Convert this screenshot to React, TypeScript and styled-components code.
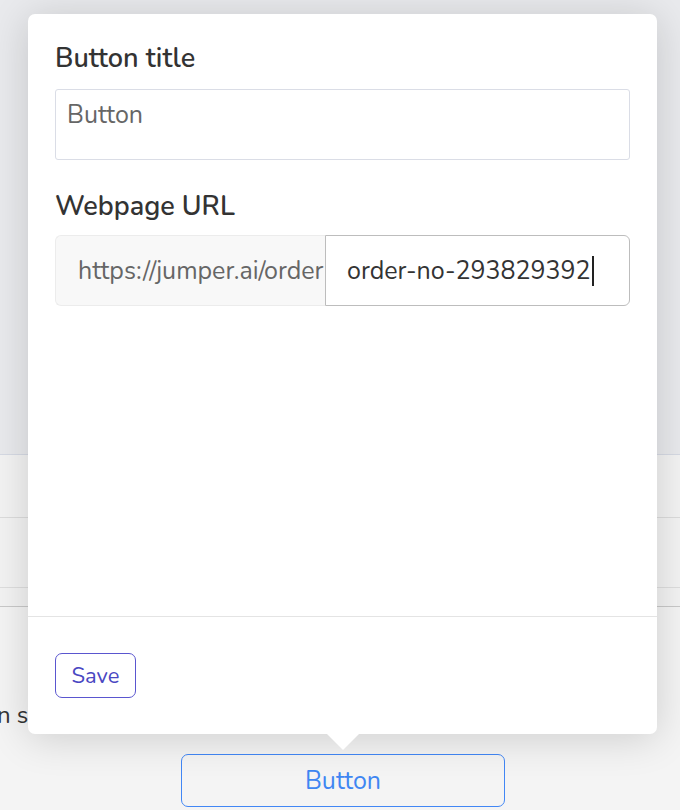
import React from 'react'
import styled, { createGlobalStyle } from 'styled-components'

const GlobalStyle = createGlobalStyle`
  html, body {
    margin: 0;
    padding: 0;
    background: #f4f4f4;
    font-family: "Nunito", "Lato", "Noto Sans", sans-serif;
  }
  * { box-sizing: border-box; }
`

const Page = styled.div`
  position: relative;
  width: 680px;
  height: 810px;
  overflow: hidden;
  display: flex;
  flex-direction: column;
  background: #f4f4f4;
`

const TopPanel = styled.div`
  height: 455px;
  flex-shrink: 0;
  background: #e9eaed;
  border-bottom: 1px solid #d6dae4;
`

const Row = styled.div<{ $h: number; $line: string }>`
  height: ${(p) => p.$h}px;
  flex-shrink: 0;
  background: #f3f3f3;
  border-bottom: 1px solid ${(p) => p.$line};
`

const Hint = styled.p`
  margin: 94px 0 0 -3px;
  font-size: 24px;
  color: #333;
  line-height: 28px;
  white-space: nowrap;
`

const TriggerWrap = styled.div`
  display: flex;
  justify-content: center;
  padding: 25px 0 0 6px;
`

const TriggerButton = styled.button`
  width: 324px;
  height: 53px;
  background: transparent;
  border: 1px solid #4287f5;
  border-radius: 7px;
  color: #3f86f2;
  font-family: inherit;
  font-size: 25px;
  cursor: pointer;
`

const Popover = styled.div`
  position: absolute;
  top: 14px;
  left: 28px;
  width: 629px;
  height: 720px;
  background: #fff;
  border-radius: 7px;
  box-shadow: 0 4px 40px rgba(0, 0, 0, 0.16);
  display: flex;
  flex-direction: column;

  &::after {
    content: '';
    position: absolute;
    bottom: -16px;
    left: 298px;
    border-left: 17px solid transparent;
    border-right: 17px solid transparent;
    border-top: 17px solid #fff;
  }
`

const Body = styled.div`
  flex: 1;
  padding: 28px 27px 0;
  border-bottom: 1px solid #e4e4e4;
`

const Label = styled.div<{ $top?: number }>`
  margin-top: ${(p) => p.$top ?? 0}px;
  font-size: 27px;
  font-weight: 600;
  color: #333;
  line-height: 34px;
`

const TextField = styled.div`
  margin-top: 13px;
  height: 71px;
  border: 1px solid #dadde6;
  border-radius: 3px;
  padding: 10px 11px;
  font-size: 25px;
  color: #666;
  line-height: 30px;
`

const UrlGroup = styled.div`
  margin-top: 11px;
  height: 71px;
  display: flex;
`

const UrlPrefix = styled.div`
  width: 270px;
  flex-shrink: 0;
  background: #f8f8f8;
  border: 1px solid #ececec;
  border-right: none;
  border-radius: 6px 0 0 6px;
  display: flex;
  align-items: center;
  padding-left: 22px;
  font-size: 25px;
  color: #666;
  white-space: nowrap;
  overflow: hidden;
`

const UrlInput = styled.div`
  flex: 1;
  border: 1px solid #bdbdbd;
  border-radius: 0 6px 6px 0;
  display: flex;
  align-items: center;
  padding-left: 21px;
  font-size: 25px;
  color: #333;
  white-space: nowrap;
`

const Caret = styled.span`
  display: inline-block;
  width: 2px;
  height: 30px;
  margin-left: 1px;
  background: #222;
`

const Footer = styled.div`
  height: 117px;
  padding: 36px 27px 0;
`

const SaveButton = styled.button`
  width: 81px;
  height: 45px;
  background: #fff;
  border: 1px solid #5a56cf;
  border-radius: 7px;
  color: #4a47c2;
  font-family: inherit;
  font-size: 22px;
  cursor: pointer;
`

export default function App() {
  return (
    <>
      <GlobalStyle />
      <Page>
        <TopPanel />
        <Row $h={63} $line="#dcdcdc" />
        <Row $h={70} $line="#dedede" />
        <Row $h={19} $line="#c9c9c9" />
        <Hint>n su</Hint>
        <TriggerWrap>
          <TriggerButton>Button</TriggerButton>
        </TriggerWrap>

        <Popover>
          <Body>
            <Label>Button title</Label>
            <TextField>Button</TextField>
            <Label $top={30}>Webpage URL</Label>
            <UrlGroup>
              <UrlPrefix>https://jumper.ai/order</UrlPrefix>
              <UrlInput>
                order-no-293829392
                <Caret />
              </UrlInput>
            </UrlGroup>
          </Body>
          <Footer>
            <SaveButton>Save</SaveButton>
          </Footer>
        </Popover>
      </Page>
    </>
  )
}
